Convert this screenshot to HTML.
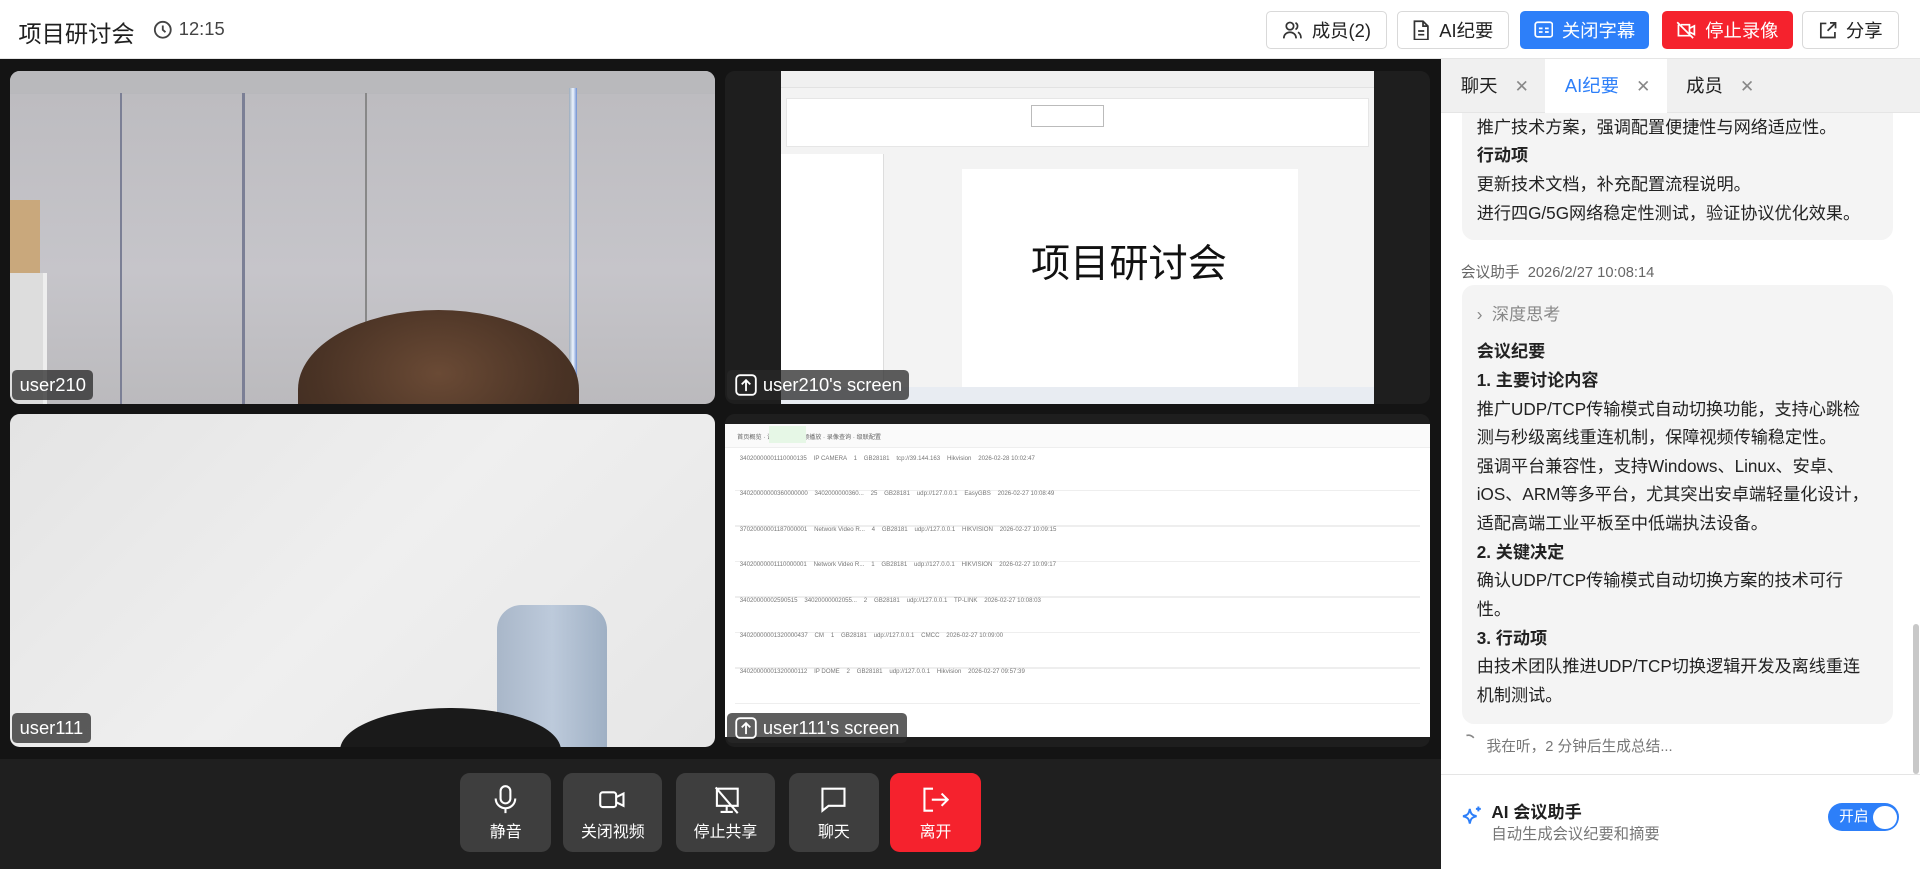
<!DOCTYPE html>
<html><head><meta charset="utf-8"><style>
*{margin:0;padding:0;box-sizing:border-box}
html,body{width:1920px;height:869px;overflow:hidden;background:#fff}
#r{zoom:1.22449;width:1568px;height:710px;position:relative;font-family:"Liberation Sans","Noto Sans CJK SC",sans-serif;color:#1f1f1f}
.a{position:absolute}
.hb{position:absolute;top:9px;height:31px;border:1px solid #d9d9d9;border-radius:4px;background:#fff;display:flex;align-items:center;justify-content:center;gap:7px;font-size:15px;color:#222}
.tile{position:absolute;border-radius:8px;overflow:hidden}
.lbl{position:absolute;left:2px;bottom:3px;height:25px;padding:0 6px;background:rgba(40,40,40,.75);border-radius:4px;color:#fff;font-size:15px;line-height:25px;display:flex;align-items:center;gap:5px}
.cb{position:absolute;top:631px;width:74px;height:65px;border-radius:8px;background:#3e3e3e;color:#fff;font-size:13px;text-align:center}
.cb svg{position:absolute;top:10px;left:50%;margin-left:-11px}
.cb span{position:absolute;top:38px;left:0;right:0}
.tab{position:absolute;top:48px;height:44px;font-size:15px;line-height:44px;padding-left:16px}
.tab i{font-style:normal;color:#888;margin-left:14px;font-size:14px}
.card{position:absolute;left:1194px;width:352px;background:#f4f4f4;border-radius:10px;font-size:14px;line-height:23.4px;padding-left:12px;color:#222}
b{font-weight:bold}
.row{position:absolute;left:600px;width:560px;height:1px;background:#eee}
</style></head><body><div id="r">
<div class="a" style="left:0;top:0;width:1568px;height:48px;border-bottom:1px solid #e5e5e5;background:#fff"></div>
<div class="a" style="left:15px;top:12px;font-size:19px">项目研讨会</div>
<svg class="a" style="left:125px;top:16px" width="16" height="16" viewBox="0 0 16 16"><circle cx="8" cy="8" r="6.5" fill="none" stroke="#444" stroke-width="1.5"/><path d="M8 4.5V8l2.2 2" fill="none" stroke="#444" stroke-width="1.5"/></svg>
<div class="a" style="left:146px;top:15px;font-size:15px;color:#444">12:15</div>
<div class="hb" style="left:1034px;width:99px"><svg width="17" height="17" viewBox="0 0 17 17" fill="none" stroke="#333" stroke-width="1.4"><circle cx="6.5" cy="5" r="3"/><path d="M1.5 15c0-3 2.2-5 5-5s5 2 5 5M11 2.3a3 3 0 0 1 0 5.4M13 10c1.6.7 2.5 2.5 2.5 5"/></svg>成员(2)</div>
<div class="hb" style="left:1141px;width:91px"><svg width="15" height="17" viewBox="0 0 15 17" fill="none" stroke="#333" stroke-width="1.4"><path d="M2 1h7l4 4v11H2z M9 1v4h4M5 9h5M5 12h5"/></svg>AI纪要</div>
<div class="hb" style="left:1241px;width:106px;background:#2d7ff9;border-color:#2d7ff9;color:#fff"><svg width="16" height="14" viewBox="0 0 16 14" fill="none" stroke="#fff" stroke-width="1.4"><rect x="1" y="1" width="14" height="12" rx="2"/><path d="M4 6h3M9 6h3M4 9h3M9 9h3"/></svg>关闭字幕</div>
<div class="hb" style="left:1357px;width:107px;background:#f5222d;border-color:#f5222d;color:#fff"><svg width="17" height="15" viewBox="0 0 17 15" fill="none" stroke="#fff" stroke-width="1.4"><path d="M4 3h7v9H2V3M11 6l4-2v7l-4-2M1 1l13 13"/></svg>停止录像</div>
<div class="hb" style="left:1472px;width:79px"><svg width="15" height="15" viewBox="0 0 15 15" fill="none" stroke="#333" stroke-width="1.4"><path d="M6 2H1.5v11.5H13V9M9 1.5h4.5V6M13.5 1.5L7 8"/></svg>分享</div>
<div class="a" style="left:0;top:48px;width:1177px;height:662px;background:#141414"></div>
<div class="a" style="left:0;top:620px;width:1177px;height:90px;background:#1f1f1f"></div>
<div class="tile" style="left:8px;top:58px;width:576px;height:272px;background:linear-gradient(180deg,#a8a9ad 0,#a8a9ad 6%,#bdbcc0 7%,#c6c5ca 60%,#bbbabd 100%)">
 <div class="a" style="left:0;top:0;width:576px;height:18px;background:#b9b9bc"></div>
 <div class="a" style="left:90px;top:18px;width:2px;height:254px;background:#7b7f95"></div>
 <div class="a" style="left:190px;top:18px;width:2px;height:254px;background:#7b7f95"></div>
 <div class="a" style="left:290px;top:18px;width:2px;height:254px;background:#888"></div>
 <div class="a" style="left:457px;top:14px;width:6px;height:258px;background:linear-gradient(90deg,#9ab,#eef5ff,#7090d0)"></div>
 <div class="a" style="left:0;top:105px;width:25px;height:60px;background:#c9a87c"></div>
 <div class="a" style="left:0;top:165px;width:30px;height:107px;background:#ddd;border-right:4px solid #eee"></div>
 <div class="a" style="left:235px;top:195px;width:230px;height:130px;border-radius:50% 50% 0 0;background:radial-gradient(ellipse at 50% 40%,#6a4a35,#4a3325 60%,#3b2a20)"></div>
 <div class="lbl">user210</div>
</div>
<div class="tile" style="left:592px;top:58px;width:576px;height:272px;background:#1e1e1e">
 <div class="a" style="left:46px;top:0;width:484px;height:272px;background:#f3f3f3"></div>
 <div class="a" style="left:46px;top:0;width:484px;height:14px;background:#f0f0f0;border-bottom:1px solid #e2e2e2"></div>
 <div class="a" style="left:50px;top:22px;width:476px;height:40px;background:#fff;border:1px solid #e6e6e6"></div>
 <div class="a" style="left:250px;top:28px;width:60px;height:18px;border:1px solid #bbb;background:#fff"></div>
 <div class="a" style="left:46px;top:68px;width:84px;height:196px;background:#fff;border-right:1px solid #ddd"></div>
 <div class="a" style="left:194px;top:80px;width:274px;height:186px;background:#fff"></div>
 <div class="a" style="left:250px;top:132px;font-size:32px;color:#111">项目研讨会</div>
 <div class="a" style="left:46px;top:258px;width:484px;height:14px;background:#e8ecf2"></div>
 <div class="lbl"><svg width="18" height="18" viewBox="0 0 18 18" fill="none" stroke="#fff" stroke-width="1.5"><rect x="1" y="1" width="16" height="16" rx="3"/><path d="M9 14V5M5.5 8.5L9 5l3.5 3.5"/></svg>user210's screen</div>
</div>
<div class="tile" style="left:8px;top:338px;width:576px;height:272px;background:linear-gradient(135deg,#e4e4e4,#efefef 50%,#e6e6e6)">
 <div class="a" style="left:398px;top:156px;width:90px;height:116px;border-radius:20px 20px 0 0;background:linear-gradient(90deg,#a9b7c9,#bdcadb,#9fb0c4)"></div>
 <div class="a" style="left:270px;top:240px;width:180px;height:70px;border-radius:50%;background:#1a1a1a"></div>
 <div class="lbl">user111</div>
</div>
<div class="tile" style="left:592px;top:338px;width:576px;height:272px;background:#1e1e1e">
 <div class="a" style="left:0;top:8px;width:576px;height:256px;background:#fff"></div>
 <div class="a" style="left:0;top:8px;width:576px;height:20px;background:#fafafa;border-bottom:1px solid #eee;font-size:5px;color:#666;padding:7px 10px">首页概览 · 设备管理 · 视频播放 · 录像查询 · 级联配置</div>
 <div class="a" style="left:36px;top:10px;width:30px;height:14px;background:#e6f7e6"></div>
</div>
<div class="row" style="top:400px"></div><div class="row" style="top:429px"></div><div class="row" style="top:458px"></div><div class="row" style="top:487px"></div><div class="row" style="top:516px"></div><div class="row" style="top:545px"></div><div class="row" style="top:574px"></div>
<div class="a" style="left:600px;top:360px;width:560px;height:220px;font-size:5px;color:#777;line-height:29px;white-space:pre">   34020000001110000135    IP CAMERA    1    GB28181    tcp://39.144.163    Hikvision    2026-02-28 10:02:47
   34020000000360000000    3402000000360...    25    GB28181    udp://127.0.0.1    EasyGBS    2026-02-27 10:08:49
   37020000001187000001    Network Video R...    4    GB28181    udp://127.0.0.1    HIKVISION    2026-02-27 10:09:15
   34020000001110000001    Network Video R...    1    GB28181    udp://127.0.0.1    HIKVISION    2026-02-27 10:09:17
   34020000002590515    34020000002055...    2    GB28181    udp://127.0.0.1    TP-LINK    2026-02-27 10:08:03
   34020000001320000437    CM    1    GB28181    udp://127.0.0.1    CMCC    2026-02-27 10:09:00
   34020000001320000112    IP DOME    2    GB28181    udp://127.0.0.1    Hikvision    2026-02-27 09:57:39</div>
<div class="lbl" style="left:594px;bottom:auto;top:582px"><svg width="18" height="18" viewBox="0 0 18 18" fill="none" stroke="#fff" stroke-width="1.5"><rect x="1" y="1" width="16" height="16" rx="3"/><path d="M9 14V5M5.5 8.5L9 5l3.5 3.5"/></svg>user111's screen</div>
<div class="cb" style="left:376px"><svg width="22" height="24" viewBox="0 0 22 24" fill="none" stroke="#fff" stroke-width="1.7"><rect x="7" y="1" width="8" height="14" rx="4"/><path d="M3 11a8 8 0 0 0 16 0M11 19v4"/></svg><span>静音</span></div>
<div class="cb" style="left:460px;width:81px"><svg width="22" height="24" viewBox="0 0 22 24" fill="none" stroke="#fff" stroke-width="1.7"><rect x="1" y="6" width="13" height="12" rx="2"/><path d="M14 10l6-3v10l-6-3"/></svg><span>关闭视频</span></div>
<div class="cb" style="left:552px;width:81px"><svg width="22" height="24" viewBox="0 0 22 24" fill="none" stroke="#fff" stroke-width="1.7"><path d="M4 3h17v14H4zM12 17v4M7 22h10M3 2l18 21"/></svg><span>停止共享</span></div>
<div class="cb" style="left:644px"><svg width="22" height="24" viewBox="0 0 22 24" fill="none" stroke="#fff" stroke-width="1.7"><path d="M2 3h18v14H7l-5 4z"/></svg><span>聊天</span></div>
<div class="cb" style="left:727px;background:#f5222d"><svg width="22" height="24" viewBox="0 0 22 24" fill="none" stroke="#fff" stroke-width="1.7"><path d="M9 3H2v18h7M8 12h13M16 7l5 5-5 5"/></svg><span>离开</span></div>
<div class="a" style="left:1177px;top:48px;width:391px;height:662px;background:#fff"></div>
<div class="a" style="left:1177px;top:48px;width:391px;height:44px;background:#f0f0f0;border-bottom:1px solid #e5e5e5"></div>
<div class="tab" style="left:1177px;width:85px">聊天<i>✕</i></div>
<div class="tab" style="left:1262px;width:99px;background:#fff;color:#2d7ff9;height:45px">AI纪要<i>✕</i></div>
<div class="tab" style="left:1361px;width:88px">成员<i>✕</i></div>
<div class="card" style="top:92px;height:104px;border-radius:0 0 10px 10px;padding-top:0">推广技术方案，强调配置便捷性与网络适应性。<br><b>行动项</b><br>更新技术文档，补充配置流程说明。<br>进行四G/5G网络稳定性测试，验证协议优化效果。</div>
<div class="a" style="left:1193px;top:213px;font-size:12px;color:#666">会议助手&nbsp;&nbsp;2026/2/27 10:08:14</div>
<div class="card" style="top:233px;height:358px;padding-top:12px"><div style="color:#888;margin-left:0">›&nbsp;&nbsp;深度思考</div><div style="height:7px"></div><b>会议纪要</b><br><b>1. 主要讨论内容</b><br>推广UDP/TCP传输模式自动切换功能，支持心跳检<br>测与秒级离线重连机制，保障视频传输稳定性。<br>强调平台兼容性，支持Windows、Linux、安卓、<br>iOS、ARM等多平台，尤其突出安卓端轻量化设计，<br>适配高端工业平板至中低端执法设备。<br><b>2. 关键决定</b><br>确认UDP/TCP传输模式自动切换方案的技术可行<br>性。<br><b>3. 行动项</b><br>由技术团队推进UDP/TCP切换逻辑开发及离线重连<br>机制测试。</div>
<svg class="a" style="left:1196px;top:599px" width="12" height="12" viewBox="0 0 12 12"><path d="M2 2a6 6 0 0 1 6 2" fill="none" stroke="#888" stroke-width="1.3"/></svg>
<div class="a" style="left:1214px;top:600px;font-size:12px;color:#777">我在听，2 分钟后生成总结...</div>
<div class="a" style="left:1562px;top:510px;width:5px;height:122px;background:#c8c8c8;border-radius:3px"></div>
<div class="a" style="left:1177px;top:632px;width:391px;height:1px;background:#e5e5e5"></div>
<svg class="a" style="left:1192px;top:657px" width="20" height="20" viewBox="0 0 20 20" fill="none" stroke="#2d7ff9" stroke-width="1.6"><path d="M8 4c.8 4 1.5 5 5.5 6-4 1-4.7 2-5.5 6-.8-4-1.5-5-5.5-6 4-1 4.7-2 5.5-6zM15 2v4M13 4h4"/></svg>
<div class="a" style="left:1218px;top:652px;font-size:14px;font-weight:bold">AI 会议助手</div>
<div class="a" style="left:1218px;top:671px;font-size:12.5px;color:#777">自动生成会议纪要和摘要</div>
<div class="a" style="left:1493px;top:656px;width:58px;height:23px;border-radius:12px;background:#2d7ff9;color:#fff;font-size:12px;line-height:23px;padding-left:9px">开启<div class="a" style="right:2px;top:2px;width:19px;height:19px;border-radius:50%;background:#fff"></div></div>
</div></body></html>
